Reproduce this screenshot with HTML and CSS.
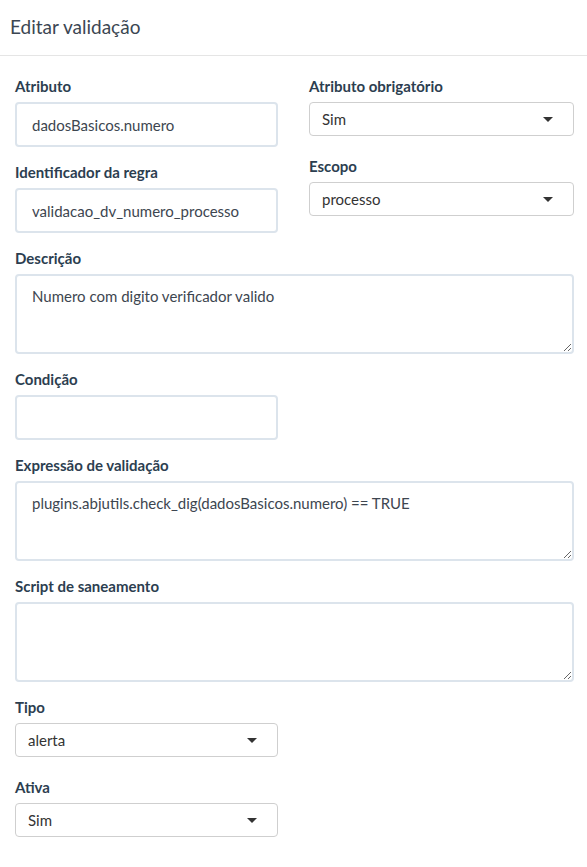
FILE: index.html
```html
<!DOCTYPE html>
<html lang="pt">
<head>
<meta charset="utf-8">
<link rel="stylesheet" href="styles.css">
</head>
<body>
<div class="modal">
  <div class="modal-header">
    <h4 class="modal-title">Editar validação</h4>
  </div>
  <div class="modal-body">
    <div class="row">
      <div class="col">
        <div class="form-group">
          <label class="label">Atributo</label>
          <div class="text-input">dadosBasicos.numero</div>
        </div>
        <div class="form-group">
          <label class="label">Identificador da regra</label>
          <div class="text-input">validacao_dv_numero_processo</div>
        </div>
      </div>
      <div class="col">
        <div class="form-group select-group">
          <label class="label">Atributo obrigatório</label>
          <div class="select"><span>Sim</span><span class="caret"></span></div>
        </div>
        <div class="form-group select-group">
          <label class="label">Escopo</label>
          <div class="select"><span>processo</span><span class="caret"></span></div>
        </div>
      </div>
    </div>
    <div class="form-group">
      <label class="label">Descrição</label>
      <textarea class="textarea">Numero com digito verificador valido</textarea>
    </div>
    <div class="form-group half">
      <label class="label">Condição</label>
      <div class="text-input"></div>
    </div>
    <div class="form-group">
      <label class="label">Expressão de validação</label>
      <textarea class="textarea">plugins.abjutils.check_dig(dadosBasicos.numero) == TRUE</textarea>
    </div>
    <div class="form-group">
      <label class="label">Script de saneamento</label>
      <textarea class="textarea"></textarea>
    </div>
    <div class="form-group select-group half">
      <label class="label">Tipo</label>
      <div class="select"><span>alerta</span><span class="caret"></span></div>
    </div>
    <div class="form-group select-group half">
      <label class="label">Ativa</label>
      <div class="select"><span>Sim</span><span class="caret"></span></div>
    </div>
  </div>
</div>
</body>
</html>
```
FILE: styles.css
```css
* { box-sizing: border-box; }
html, body { margin: 0; padding: 0; background: #fff; }
body {
  font-family: Lato, "Open Sans", "Liberation Sans", sans-serif;
  color: #2c3e50;
  font-size: 15px;
}
.modal { width: 587px; }
.modal-header {
  height: 56px;
  border-bottom: 1px solid #e5e5e5;
  padding: 0 10px;
  display: flex;
  align-items: center;
}
.modal-title {
  margin: 0;
  font-size: 19px;
  font-weight: 400;
  color: #3b4652;
  line-height: 1;
  padding-bottom: 2px;
}
.modal-body { padding: 20px 13px 20px 15px; }
.row {
  display: grid;
  grid-template-columns: 263px 265px;
  column-gap: 31px;
}
.form-group {
  display: flex;
  flex-direction: column;
  margin-bottom: 15px;
}
.select-group { margin-bottom: 20px; }
.half { width: 263px; }
.label {
  font-weight: 700;
  font-size: 15px;
  line-height: 21px;
  margin-bottom: 5px;
  color: #2c3e50;
}
.text-input {
  height: 45px;
  border: 2px solid #dce4ec;
  border-radius: 4px;
  padding: 1px 15px 0;
  font-size: 15px;
  color: #3d4650;
  display: flex;
  align-items: center;
}
.textarea {
  display: block;
  width: 100%;
  height: 80px;
  border: 2px solid #dce4ec;
  border-radius: 4px;
  padding: 10px 15px;
  font-family: inherit;
  font-size: 15px;
  line-height: 21px;
  color: #3d4650;
  resize: vertical;
  margin: 0;
  outline: none;
}
.select {
  height: 34px;
  border: 1px solid #cfcfcf;
  border-radius: 4px;
  padding: 0 12px;
  font-size: 15px;
  color: #333;
  display: flex;
  align-items: center;
  justify-content: space-between;
}
.caret {
  width: 0;
  height: 0;
  border-left: 5px solid transparent;
  border-right: 5px solid transparent;
  border-top: 5px solid #333;
  margin-right: 8px;
}
```
